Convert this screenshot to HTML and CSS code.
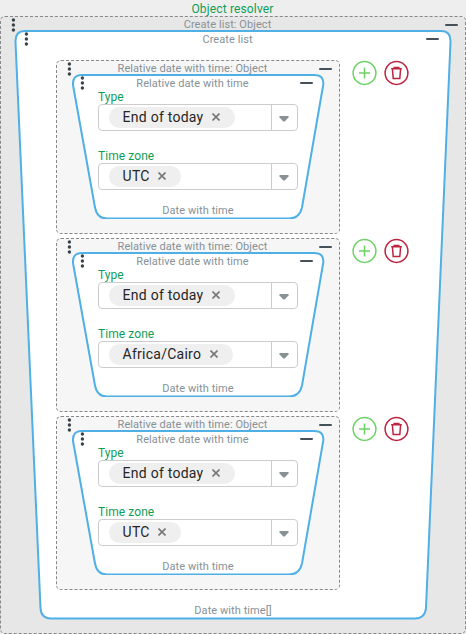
FILE: index.html
```
<!doctype html>
<html lang="en">
  <head>
    <meta charset="UTF-8" />
    <meta name="viewport" content="width=device-width, initial-scale=1.0" />
    <title>Object resolver</title>
    <link rel="stylesheet" href="styles.css">
  </head>
  <body>
    <!-- Shared icons and block outlines -->
    <svg class="sprite" aria-hidden="true">
      <symbol id="dots" viewBox="0 0 5 14">
        <circle cx="2.4" cy="2" r="1.7" /><circle cx="2.4" cy="7" r="1.7" /><circle cx="2.4" cy="12" r="1.7" />
      </symbol>
      <symbol id="cross" viewBox="0 0 8 8">
        <path d="M.5.5 7.5 7.5M7.5.5.5 7.5" />
      </symbol>
      <symbol id="arrow" viewBox="0 0 10 6">
        <path d="M.5 0H9.5V1.5L5.7 5.6H4.3L.5 1.5Z" />
      </symbol>
      <symbol id="add" viewBox="0 0 26 26">
        <circle cx="13.500" cy="13" r="11.4" /><path d="M13.500 7.5v11M8 13h11" />
      </symbol>
      <symbol id="trash" viewBox="0 0 26 26">
        <circle cx="13.500" cy="13" r="11.4" />
        <path d="M8.200 8.8H18.800M11.200 8.5V7.5H15.800V8.5M9.400 9l.8 9.5H16.800l.8-9.5" />
      </symbol>
      <symbol id="shape-inner" viewBox="0 0 254 146">
        <path d="M10 2H242Q252.500 2 251.200 12L230 134.500Q227.500 145.500 217 145.500H35Q25 145.500 23 134.500L1.100 12.500Q0 2 10 2Z" />
      </symbol>
    </svg>

    <h1 class="page-title">Object resolver</h1>
    <section class="object object-root">
      <header class="head">
        <svg class="dots"><use href="#dots" /></svg>
        <span class="head-title">Create list: Object</span>
        <span class="minus"></span>
      </header>
      <div class="block block-root">
        <svg class="outline" viewBox="0 0 438 590">
          <path d="M11 1H427Q437 1 436.5 12L412 578Q411 588.5 401 588.5H37Q27 588.5 26.5 578L1.5 12Q1 1 11 1Z" />
        </svg>
        <header class="head">
          <svg class="dots"><use href="#dots" /></svg>
          <span class="head-title">Create list</span>
          <span class="minus"></span>
        </header>

        <div class="items">
          <div class="item">
            <section class="object">
              <header class="head">
                <svg class="dots"><use href="#dots" /></svg>
                <span class="head-title">Relative date with time: Object</span>
                <span class="minus"></span>
              </header>
              <div class="block">
                <svg class="outline"><use href="#shape-inner" /></svg>
                <header class="head">
                  <svg class="dots"><use href="#dots" /></svg>
                  <span class="head-title">Relative date with time</span>
                  <span class="minus"></span>
                </header>
                <div class="field">
                  <div class="label">Type</div>
                  <div class="select">
                    <span class="chip">End of today<svg class="cross"><use href="#cross" /></svg></span>
                    <span class="toggle"><svg class="arrow"><use href="#arrow" /></svg></span>
                  </div>
                </div>
                <div class="field">
                  <div class="label">Time zone</div>
                  <div class="select">
                    <span class="chip">UTC<svg class="cross"><use href="#cross" /></svg></span>
                    <span class="toggle"><svg class="arrow"><use href="#arrow" /></svg></span>
                  </div>
                </div>
                <div class="result">Date with time</div>
              </div>
            </section>
            <svg class="action add"><use href="#add" /></svg>
            <svg class="action trash"><use href="#trash" /></svg>
          </div>

          <div class="item">
            <section class="object">
              <header class="head">
                <svg class="dots"><use href="#dots" /></svg>
                <span class="head-title">Relative date with time: Object</span>
                <span class="minus"></span>
              </header>
              <div class="block">
                <svg class="outline"><use href="#shape-inner" /></svg>
                <header class="head">
                  <svg class="dots"><use href="#dots" /></svg>
                  <span class="head-title">Relative date with time</span>
                  <span class="minus"></span>
                </header>
                <div class="field">
                  <div class="label">Type</div>
                  <div class="select">
                    <span class="chip">End of today<svg class="cross"><use href="#cross" /></svg></span>
                    <span class="toggle"><svg class="arrow"><use href="#arrow" /></svg></span>
                  </div>
                </div>
                <div class="field">
                  <div class="label">Time zone</div>
                  <div class="select">
                    <span class="chip">Africa/Cairo<svg class="cross"><use href="#cross" /></svg></span>
                    <span class="toggle"><svg class="arrow"><use href="#arrow" /></svg></span>
                  </div>
                </div>
                <div class="result">Date with time</div>
              </div>
            </section>
            <svg class="action add"><use href="#add" /></svg>
            <svg class="action trash"><use href="#trash" /></svg>
          </div>

          <div class="item">
            <section class="object">
              <header class="head">
                <svg class="dots"><use href="#dots" /></svg>
                <span class="head-title">Relative date with time: Object</span>
                <span class="minus"></span>
              </header>
              <div class="block">
                <svg class="outline"><use href="#shape-inner" /></svg>
                <header class="head">
                  <svg class="dots"><use href="#dots" /></svg>
                  <span class="head-title">Relative date with time</span>
                  <span class="minus"></span>
                </header>
                <div class="field">
                  <div class="label">Type</div>
                  <div class="select">
                    <span class="chip">End of today<svg class="cross"><use href="#cross" /></svg></span>
                    <span class="toggle"><svg class="arrow"><use href="#arrow" /></svg></span>
                  </div>
                </div>
                <div class="field">
                  <div class="label">Time zone</div>
                  <div class="select">
                    <span class="chip">UTC<svg class="cross"><use href="#cross" /></svg></span>
                    <span class="toggle"><svg class="arrow"><use href="#arrow" /></svg></span>
                  </div>
                </div>
                <div class="result">Date with time</div>
              </div>
            </section>
            <svg class="action add"><use href="#add" /></svg>
            <svg class="action trash"><use href="#trash" /></svg>
          </div>
        </div>
        <div class="result">Date with time[]</div>
      </div>
    </section>
  </body>
</html>
```
FILE: styles.css
```
* {
  box-sizing: border-box;
}

body {
  margin: 0;
  background: #eeeeee;
  font-family: Roboto, sans-serif;
  font-size: 11px;
  letter-spacing: 0.07px;
  color: #879196;
}

.sprite {
  position: absolute;
  width: 0;
  height: 0;
}

.page-title {
  height: 16px;
  margin: 0;
  padding-right: 1px;
  font-size: 12px;
  font-weight: 400;
  line-height: 18px;
  letter-spacing: 0.15px;
  text-align: center;
  color: #0f9d58;
}

/* Dashed object frame */
.object {
  width: 284px;
  height: 174px;
  padding-left: 15px;
  border: 1px dashed #888;
  border-radius: 5px;
  background: #f6f6f6;
}

.object-root {
  width: 466px;
  height: 618px;
  padding-left: 13px;
  background: #e7e7e7;
}

/* Title row: drag handle, name, collapse */
.head {
  display: flex;
  align-items: flex-start;
  height: 12px;
  line-height: 16px;
}

.object > .head {
  margin: 0 7px 0 -5px;
}

.object-root > .head {
  height: 13px;
  margin: 0 7px 0 -3px;
}

.head-title {
  flex: 1;
  padding-right: 6px;
  text-align: center;
}

.block > .head .head-title {
  padding: 1px 0 0;
}

.dots {
  position: relative;
  z-index: 1;
  width: 5px;
  height: 14px;
  margin-top: 1px;
  fill: #37434a;
}

.minus {
  width: 13px;
  height: 2px;
  margin-top: 7px;
  border-radius: 1px;
  background: #455058;
}

/* Tapered block */
.block {
  position: relative;
  width: 254px;
  height: 146px;
  padding: 2px 0 0 26px;
}

.block-root {
  width: 438px;
  height: 590px;
  padding: 1px 0 0 42px;
}

.block > .head {
  position: relative;
  height: 14px;
  margin: 0 13px 0 -18px;
}

.block-root > .head {
  margin: 0 13px 0 -32px;
}

.outline {
  position: absolute;
  top: 0;
  left: 0;
  width: 100%;
  height: 100%;
  overflow: visible;
  fill: #fff;
  stroke: #4fb0e6;
  stroke-width: 2;
}

.items {
  position: relative;
  display: flex;
  flex-direction: column;
  gap: 4px;
  padding-top: 15px;
}

.item {
  display: flex;
}

.action {
  width: 26px;
  height: 26px;
  fill: none;
  stroke-width: 1.5;
}

.add {
  margin-left: 11px;
  stroke: #6dd265;
}

.trash {
  margin-left: 6px;
  stroke: #bd2440;
}

/* Form fields */
.field {
  position: relative;
  width: 200px;
  height: 59px;
}

.label {
  height: 15px;
  font-size: 12px;
  line-height: 17px;
  color: #0f9d58;
}

.select {
  display: flex;
  align-items: center;
  height: 27px;
  padding-left: 10px;
  border: 1px solid #ccc;
  border-radius: 4px;
  background: #fff;
}

.chip {
  display: flex;
  align-items: center;
  height: 21px;
  padding: 0 15px 1px 13.6px;
  border-radius: 11px;
  background: #efefef;
  font-size: 14px;
  letter-spacing: 0.25px;
  color: #262626;
}

.cross {
  width: 8px;
  height: 8px;
  margin-left: 8.4px;
  fill: none;
  stroke: #777;
  stroke-width: 1.6;
}

.toggle {
  display: flex;
  align-items: center;
  justify-content: center;
  width: 26px;
  height: 100%;
  margin-left: auto;
  padding: 3px 1px 0 0;
  border-left: 1px solid #ccc;
}

.arrow {
  width: 10px;
  height: 6px;
  fill: #879196;
}

.result {
  position: relative;
  width: 200px;
  line-height: 14px;
  margin-top: -3px;
  text-align: center;
}

.block-root > .result {
  width: 354px;
  margin-top: 14px;
}
```
